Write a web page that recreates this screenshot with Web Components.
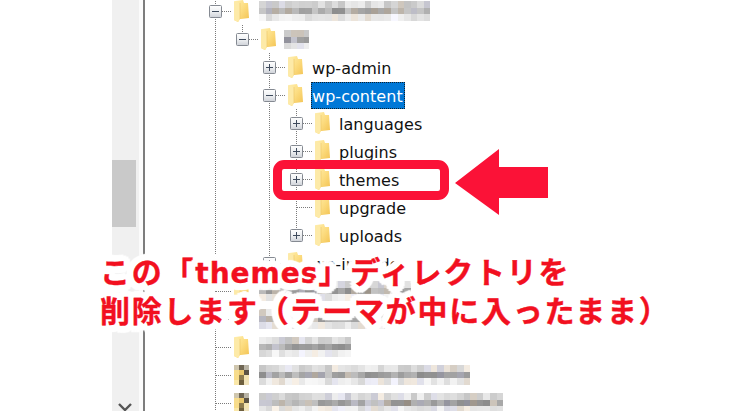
<!DOCTYPE html>
<html lang="ja">
<head>
<meta charset="utf-8">
<title>themes</title>
<style>
  html, body { margin: 0; height: 100%; background: #fff; overflow: hidden; }
</style>
</head>
<body>
<shot-page>
  <v-scrollbar slot="bar"></v-scrollbar>
  <tree-row guides="" kind="minus" line="full" mosaic="171" seed="3" h="20"></tree-row>
  <tree-row guides="1" kind="minus" line="up" mosaic="25" seed="9" h="19" dx="-2"></tree-row>
  <tree-row guides="1 0" kind="plus" line="full">wp-admin</tree-row>
  <tree-row guides="1 0" kind="minus" line="full" selected>wp-content</tree-row>
  <tree-row guides="1 0 1" kind="plus" line="full">languages</tree-row>
  <tree-row guides="1 0 1" kind="plus" line="full">plugins</tree-row>
  <tree-row guides="1 0 1" kind="plus" line="full">themes</tree-row>
  <tree-row guides="1 0 1" kind="leaf" line="full">upgrade</tree-row>
  <tree-row guides="1 0 1" kind="plus" line="up">uploads</tree-row>
  <tree-row guides="1 0" kind="plus" line="up">wp-includes</tree-row>
  <tree-row guides="" kind="leaf" line="full" mosaic="152" seed="14" h="20"></tree-row>
  <tree-row guides="" kind="leaf" line="full" mosaic="130" seed="21" h="20"></tree-row>
  <tree-row guides="" kind="leaf" line="full" mosaic="92" seed="27" h="20"></tree-row>
  <tree-row guides="" kind="leaf" line="full" icon="unknown" mosaic="212" seed="33" h="20"></tree-row>
  <tree-row guides="" kind="leaf" line="full" icon="unknown" mosaic="247" seed="41" h="20"></tree-row>
  <callout-mark slot="over"></callout-mark>
  <callout-text slot="over">
    <span>この「<b style="font: 700 28px 'DejaVu Sans', sans-serif; letter-spacing: 1px;">themes</b>」ディレクトリを</span>
    <span>削除します（テーマが中に入ったまま）</span>
  </callout-text>
</shot-page>

<script>
// small seeded random so the mosaics come out the same every time
function seeded(n) {
  let s = n * 7919 + 13;
  return () => {
    s = (s * 16807) % 2147483647;
    return (s % 1000) / 1000;
  };
}

customElements.define(
  "shot-page",
  class extends HTMLElement {
    constructor() {
      super();
      const shadowRoot = this.attachShadow({ mode: "open" });
      shadowRoot.innerHTML = `
      <style>
        :host {
          display: flex;
          position: relative;
          width: 738px;
          height: 411px;
          overflow: hidden;
          background: #fff;
        }
        .left { width: 112px; flex: none; }
        .gap { width: 56px; flex: none; }
        .tree { display: flex; flex-direction: column; margin-top: -3px; margin-left: 1px; }
      </style>
      <div class="left"></div>
      <slot name="bar"></slot>
      <div class="gap"></div>
      <div class="tree"><slot></slot></div>
      <slot name="over"></slot>
    `;
    }
  }
);

customElements.define(
  "v-scrollbar",
  class extends HTMLElement {
    constructor() {
      super();
      const shadowRoot = this.attachShadow({ mode: "open" });
      shadowRoot.innerHTML = `
      <style>
        :host { display: flex; flex: none; width: 33px; height: 411px; }
        .track {
          width: 27px;
          background: #f0f0f0;
          display: flex;
          flex-direction: column;
          align-items: flex-start;
          padding-top: 160px;
          box-sizing: border-box;
        }
        .thumb { width: 24px; height: 67px; background: #c9c9c9; }
        svg { margin-top: auto; margin-left: 6px; display: block; }
        .edge { width: 4px; background: #fbfbfb; }
        .line { width: 2px; background: #7d7d7d; }
      </style>
      <div class="track">
        <div class="thumb"></div>
        <svg width="14" height="8" viewBox="0 0 14 8"><path d="M1 1l6 6 6-6" fill="none" stroke="#555" stroke-width="2.4"/></svg>
      </div>
      <div class="edge"></div>
      <div class="line"></div>
    `;
    }
  }
);

customElements.define(
  "mosaic-text",
  class extends HTMLElement {
    connectedCallback() {
      const shadowRoot = this.shadowRoot || this.attachShadow({ mode: "open" });
      const w = +this.getAttribute("w");
      const h = +this.getAttribute("h") || 19;
      const rand = seeded(+this.getAttribute("seed") || 1);
      const cell = 6.6;
      const cols = Math.round(w / cell);
      const rows = Math.round(h / cell);
      let rects = "";
      for (let y = 0; y < rows; y++) {
        for (let x = 0; x < cols; x++) {
          const mid = y === Math.floor(rows / 2);
          const base = mid ? 140 + rand() * 60 : y === 0 ? 195 + rand() * 45 : 215 + rand() * 32;
          const g = Math.round(base);
          const tint = rand();
          const r = tint > 0.85 ? g + 8 : g;
          const b = tint < 0.15 ? g + 10 : tint > 0.85 ? g - 10 : g;
          rects += `<rect x="${x * cell}" y="${y * cell}" width="${cell + 0.2}" height="${cell + 0.2}" fill="rgb(${r},${g},${b})"/>`;
        }
      }
      shadowRoot.innerHTML = `
      <style>
        :host { display: block; line-height: 0; }
        svg { filter: blur(0.7px); }
      </style>
      <svg width="${w}" height="${h}" shape-rendering="crispEdges">${rects}</svg>
    `;
    }
  }
);

customElements.define(
  "tree-row",
  class extends HTMLElement {
    constructor() {
      super();
      this.attachShadow({ mode: "open" });
    }

    connectedCallback() {
      const guides = (this.getAttribute("guides") || "").split(" ").filter(Boolean);
      const kind = this.getAttribute("kind");
      const line = this.getAttribute("line");
      const mosaic = this.getAttribute("mosaic");
      const selected = this.hasAttribute("selected");

      const columns = guides.map((g) => `<div class="col ${g === "1" ? "guide" : ""}"></div>`).join("");
      const sign = kind === "leaf" ? "" : `
        <svg class="box" width="13" height="13" viewBox="0 0 13 13">
          <rect x=".5" y=".5" width="12" height="12" rx="1" fill="url(#b)" stroke="#858a92"/>
          <defs><linearGradient id="b" x1="0" y1="0" x2="0" y2="1"><stop offset="0" stop-color="#fff"/><stop offset=".5" stop-color="#eef0f2"/><stop offset="1" stop-color="#cfd2d8"/></linearGradient></defs>
          <path d="M3 6.5h7" stroke="#3e4a5c"/>${kind === "plus" ? '<path d="M6.5 3v7" stroke="#3e4a5c"/>' : ""}
        </svg>`;

      const icon = this.getAttribute("icon") === "unknown" ? `
        <svg class="icon" width="15" height="24" viewBox="0 0 3 4" shape-rendering="crispEdges">
          <rect width="1" height="1" fill="#cfc6ae"/><rect x="1" width="1" height="1" fill="#6f6654"/><rect x="2" width="1" height="1" fill="#b9b4a6"/>
          <rect y="1" width="1" height="1" fill="#f7dc8c"/><rect x="1" y="1" width="1" height="1" fill="#e9c76c"/><rect x="2" y="1" width="1" height="1" fill="#5c5344"/>
          <rect y="2" width="1" height="1" fill="#f8dc8a"/><rect x="1" y="2" width="1" height="1" fill="#8f7c4e"/><rect x="2" y="2" width="1" height="1" fill="#f3e3b0"/>
          <rect y="3" width="1" height="1" fill="#fae7a8"/><rect x="1" y="3" width="1" height="1" fill="#6e5f3e"/><rect x="2" y="3" width="1" height="1" fill="#efe2bb"/>
        </svg>` : `
        <svg class="icon" width="15" height="22" viewBox="0 0 15 22">
          <defs><linearGradient id="f" x1="0" y1="0" x2="1" y2="1"><stop offset="0" stop-color="#fff0b0"/><stop offset=".5" stop-color="#fcdc80"/><stop offset="1" stop-color="#f2c14f"/></linearGradient></defs>
          <path d="M1 1L9 0l1 3 4 0 1 15-8 1-1 0-2 3-4-2z" fill="url(#f)"/>
          <path d="M0 1l6 2 0 16-2 3-4-2z" fill="#fdeaa8"/>
          <path d="M6 3v16" stroke="#eec86c" stroke-width=".7"/>
        </svg>`;

      const dx = +this.getAttribute("dx") || 0;
      const label = mosaic
        ? `<mosaic-text style="margin-left:${10 + dx}px" w="${mosaic}" h="${this.getAttribute("h") || 19}" seed="${this.getAttribute("seed")}"></mosaic-text>`
        : `<span class="label ${selected ? "selected" : ""}"><slot></slot></span>`;

      this.shadowRoot.innerHTML = `
      <style>
        :host {
          display: flex;
          align-items: center;
          height: 28px;
          font: 16px "DejaVu Sans", sans-serif;
          color: #111;
          white-space: nowrap;
        }
        .col { width: 27px; height: 28px; flex: none; box-sizing: border-box; }
        .guide { background: linear-gradient(#7a7a7a 50%, transparent 50%) 13px 0 / 1px 2px repeat-y; }
        .own {
          position: relative;
          display: flex;
          align-items: center;
          width: 32px;
          height: 28px;
          flex: none;
        }
        .stem { width: 1px; position: absolute; left: 13px; top: 0;
          background: linear-gradient(#7a7a7a 50%, transparent 50%) 0 0 / 1px 2px repeat-y; }
        .stem.full { height: 28px; }
        .stem.up { height: 14px; }
        .dash { position: absolute; left: 14px; width: 15px; top: 14px; height: 1px;
          background: linear-gradient(90deg, #7a7a7a 50%, transparent 50%) 0 0 / 2px 1px repeat-x; }
        .box { position: absolute; left: 7px; top: 8px; }
        .icon { flex: none; display: block; position: relative; }
        .label { margin-left: 8px; padding: 0 1px; line-height: 30px; height: 27px; letter-spacing: 0.05px; }
        .label.selected {
          background: #0078d7;
          color: #fff;
          outline: 1px dotted #10202c;
          outline-offset: -1px;
          padding: 0 2px 0 1px;
        }
      </style>
      ${columns}
      <div class="own">
        <div class="stem ${line}"></div>
        <div class="dash"></div>
        ${sign}
      </div>
      ${icon}
      ${label}
    `;
    }
  }
);

customElements.define(
  "callout-mark",
  class extends HTMLElement {
    constructor() {
      super();
      const shadowRoot = this.attachShadow({ mode: "open" });
      shadowRoot.innerHTML = `
      <style>
        :host { display: block; }
        .frame {
          position: absolute;
          left: 273px;
          top: 160px;
          width: 176px;
          height: 40px;
          box-sizing: border-box;
          border: 9.5px solid #fb1237;
          border-radius: 11px;
        }
        svg { position: absolute; left: 455px; top: 149px; }
      </style>
      <div class="frame"></div>
      <svg width="93" height="66" viewBox="0 0 93 66"><path d="M0 34L44 0V18H93V49H44V66z" fill="#fb1237"/></svg>
    `;
    }
  }
);

customElements.define(
  "callout-text",
  class extends HTMLElement {
    constructor() {
      super();
      const shadowRoot = this.attachShadow({ mode: "open" });
      // white halo as shadows so the letters themselves can take a thin red stroke
      const halo = [];
      for (let i = 0; i < 16; i++) {
        const a = (i / 16) * Math.PI * 2;
        halo.push(`${(Math.cos(a) * 7).toFixed(1)}px ${(Math.sin(a) * 7).toFixed(1)}px 1px #fff`);
        halo.push(`${(Math.cos(a) * 3.5).toFixed(1)}px ${(Math.sin(a) * 3.5).toFixed(1)}px 0 #fff`);
      }
      shadowRoot.innerHTML = `
      <style>
        :host {
          position: absolute;
          left: 100px;
          top: 251px;
          display: flex;
          flex-direction: column;
          font: 700 30px/39px "Noto Sans CJK JP", "DejaVu Sans", sans-serif;
          letter-spacing: 1.75px;
          color: #f2101f;
          white-space: nowrap;
          -webkit-text-stroke: 0.4px #f2101f;
          text-shadow: ${halo.join(", ")};
        }
        ::slotted(span) { display: block; }
      </style>
      <slot></slot>
    `;
    }
  }
);
</script>
</body>
</html>
